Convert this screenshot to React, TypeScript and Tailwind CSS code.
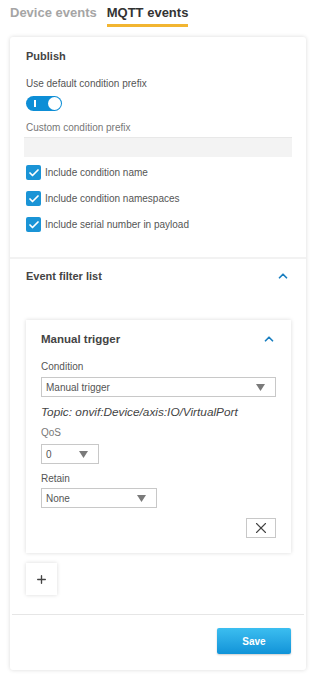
import { ChevronUp, Check, X, Plus } from "lucide-react"

function Caret() {
  return (
    <svg width="9" height="7" viewBox="0 0 9 7" className="shrink-0">
      <path d="M0 0 L9 0 L4.5 7 Z" fill="#7a7a7a" />
    </svg>
  )
}

function Select({ value, className }: { value: string; className: string }) {
  return (
    <div
      className={`flex items-center justify-between border border-[#c8c8c8] bg-white pl-[4px] pr-[10px] text-[10px] leading-[13px] text-[#555] ${className}`}
    >
      <span>{value}</span>
      <Caret />
    </div>
  )
}

function CheckRow({ label }: { label: string }) {
  return (
    <div className="flex h-[15px] items-center gap-[4px]">
      <div className="flex h-[15px] w-[15px] items-center justify-center rounded-[2px] bg-[#1a94d6]">
        <Check size={12} strokeWidth={3.5} color="white" />
      </div>
      <span className="text-[10px] leading-[13px] text-[#555]">{label}</span>
    </div>
  )
}

export default function App() {
  return (
    <div className="min-h-[678px] w-[310px] bg-white pb-[8px] font-['Liberation_Sans',Arial,sans-serif]">
      {/* Tabs */}
      <div className="flex gap-[10px] pl-[10px] pt-[5px]">
        <div className="text-[13px] font-bold leading-[16px] text-[#a5a5a5]">Device events</div>
        <div className="flex flex-col">
          <div className="text-[13px] font-bold leading-[16px] text-[#333]">MQTT events</div>
          <div className="mt-[3px] h-[3px] w-[81px] bg-[#f2b531]" />
        </div>
      </div>

      {/* Card */}
      <div className="ml-[10px] mt-[10px] w-[296px] rounded-[3px] bg-white shadow-[0_0_4px_rgba(0,0,0,0.15)]">
        <div className="px-[16px] pb-[25px] pt-[12px]">
          <div className="text-[11px] font-bold leading-[14px] text-[#444]">Publish</div>
          <div className="mt-[14px] text-[10px] leading-[13px] text-[#555]">Use default condition prefix</div>
          <div className="mt-[6px] flex h-[15px] w-[36px] items-center justify-between rounded-full bg-[#0d8ed6] pl-[8px] pr-[1px]">
            <div className="h-[7px] w-[2px] bg-white" />
            <div className="h-[13px] w-[13px] rounded-full bg-white" />
          </div>
          <div className="mt-[10px] text-[10px] leading-[13px] text-[#777]">Custom condition prefix</div>
          <div className="-ml-[2px] mt-[3px] h-[20px] w-[268px] border-t border-[#e8e8e8] bg-[#f3f3f3]" />
          <div className="mt-[8px] flex flex-col gap-[11px]">
            <CheckRow label="Include condition name" />
            <CheckRow label="Include condition namespaces" />
            <CheckRow label="Include serial number in payload" />
          </div>
        </div>

        <div className="border-t-[2px] border-[#f2f2f2] px-[16px] pb-[19px] pt-[10px]">
          <div className="flex items-center justify-between">
            <div className="text-[11px] font-bold leading-[14px] text-[#444]">Event filter list</div>
            <ChevronUp size={14} strokeWidth={3} color="#1a7fc0" />
          </div>

          <div className="-mr-[1px] mt-[37px] px-[15px] pb-[15px] pt-[12px] shadow-[0_0_4px_rgba(0,0,0,0.15)]">
            <div className="flex items-center justify-between">
              <div className="text-[11.5px] font-bold leading-[14px] text-[#444]">Manual trigger</div>
              <ChevronUp size={14} strokeWidth={3} color="#1a7fc0" />
            </div>
            <div className="mt-[14px] text-[10px] leading-[13px] text-[#555]">Condition</div>
            <Select value="Manual trigger" className="mt-[4px] h-[20px] w-full" />
            <div className="mt-[8px] text-[11.8px] italic leading-[14px] text-[#444]">
              Topic: onvif:Device/axis:IO/VirtualPort
            </div>
            <div className="mt-[7px] text-[10px] leading-[13px] text-[#777]">QoS</div>
            <Select value="0" className="mt-[5px] h-[20px] w-[58px]" />
            <div className="mt-[8px] text-[10px] leading-[13px] text-[#555]">Retain</div>
            <Select value="None" className="mt-[3px] h-[20px] w-[116px]" />
            <div className="mt-[10px] flex justify-end">
              <div className="flex h-[20px] w-[30px] items-center justify-center border border-[#c8c8c8] bg-white">
                <X size={18} strokeWidth={1.5} color="#444" />
              </div>
            </div>
          </div>

          <div className="mt-[10px] flex h-[32px] w-[31px] items-center justify-center bg-white shadow-[0_0_4px_rgba(0,0,0,0.15)]">
            <Plus size={13} strokeWidth={2.5} color="#444" />
          </div>
        </div>

        <div className="mx-[2px] flex justify-end border-t border-[#e6e6e6] pb-[16px] pr-[13px] pt-[13px]">
          <button className="h-[26px] w-[74px] rounded-[2px] bg-gradient-to-b from-[#3bbef0] to-[#0f93d8] text-[10px] font-bold text-white shadow-[0_1px_2px_rgba(0,0,0,0.2)]">
            Save
          </button>
        </div>
      </div>
    </div>
  )
}
